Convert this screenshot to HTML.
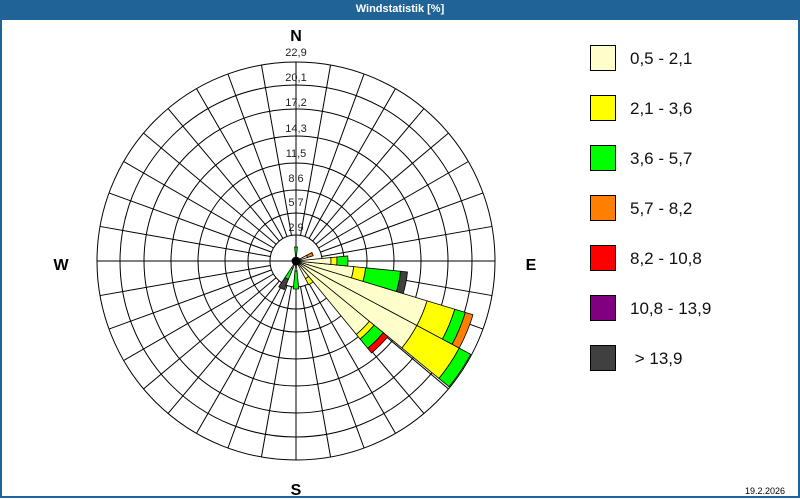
<!DOCTYPE html>
<html><head><meta charset="utf-8"><style>
body{margin:0;width:800px;height:500px;overflow:hidden;background:#fff;font-family:"Liberation Sans",sans-serif}
#wrap{position:absolute;left:0;top:0;width:796px;height:496px;border:2px solid #1f6397;border-top:none}
#hdr{position:absolute;left:0;top:0;width:800px;height:20px;background:#1f6397;color:#fff;font-size:11px;font-weight:bold;text-align:center;line-height:18px}
.lb{position:absolute;left:590px;width:24px;height:24px;border:1px solid #000}
.lt{position:absolute;left:630px;font-size:17px;color:#111}
</style></head><body>
<div id="wrap"></div>
<div id="hdr">Windstatistik [%]</div>
<svg id="s" width="800" height="500" style="position:absolute;left:0;top:0">
<g id="grid" stroke="#000" stroke-width="1" fill="none"></g>
<g id="pet" stroke="#000" stroke-width="0.8"></g>
<g font-family="Liberation Sans" font-size="11" fill="#222" text-anchor="middle">
<text x="296" y="56">22,9</text><text x="296" y="81">20,1</text><text x="296" y="106">17,2</text>
<text x="296" y="132">14,3</text><text x="296" y="157">11,5</text><text x="296" y="182">8,6</text>
<text x="296" y="206">5,7</text><text x="296" y="231">2,9</text>
</g>
<g font-family="Liberation Sans" font-size="16" font-weight="bold" fill="#000" text-anchor="middle">
<text x="296" y="41">N</text><text x="296" y="495">S</text><text x="61" y="270">W</text><text x="531" y="270">E</text>
</g>
<text x="765" y="494" font-family="Liberation Sans" font-size="9" text-anchor="middle" fill="#000">19.2.2026</text>
</svg>
<div class="lb" style="top:45px;background:#ffffcc"></div><div class="lt" style="top:49px">0,5 - 2,1</div>
<div class="lb" style="top:95px;background:#ffff00"></div><div class="lt" style="top:99px">2,1 - 3,6</div>
<div class="lb" style="top:145px;background:#00ff00"></div><div class="lt" style="top:149px">3,6 - 5,7</div>
<div class="lb" style="top:195px;background:#ff8000"></div><div class="lt" style="top:199px">5,7 - 8,2</div>
<div class="lb" style="top:245px;background:#ff0000"></div><div class="lt" style="top:249px">8,2 - 10,8</div>
<div class="lb" style="top:295px;background:#800080"></div><div class="lt" style="top:299px">10,8 - 13,9</div>
<div class="lb" style="top:345px;background:#404040"></div><div class="lt" style="top:349px">&nbsp;&gt; 13,9</div>
<script>
var cx=296,cy=261;
function P(r,b){b=b*Math.PI/180;return [(cx+r*Math.sin(b)).toFixed(2),(cy-r*Math.cos(b)).toFixed(2)];}
var g=document.getElementById('grid'),h='';
[48,71,98,125,152,176,199].forEach(function(r){h+='<circle cx="'+cx+'" cy="'+cy+'" r="'+r+'"/>';});
for(var a=0;a<360;a+=10){var p=P(26,a),q=P(199,a);h+='<line x1="'+p[0]+'" y1="'+p[1]+'" x2="'+q[0]+'" y2="'+q[1]+'"/>';}
h+='<circle cx="'+cx+'" cy="'+cy+'" r="26" fill="#fff"/>';
h+='<line x1="'+cx+'" y1="'+(cy-199)+'" x2="'+cx+'" y2="'+(cy+199)+'"/><line x1="'+(cx-199)+'" y1="'+cy+'" x2="'+(cx+199)+'" y2="'+cy+'"/>';
g.innerHTML=h;
var C={l:'#ffffcc',y:'#ffff00',g:'#00ff00',o:'#ff8000',r:'#ff0000',d:'#404040'};
var pets=[
[106.9,118.1,[[0,137,'l'],[137,166,'y'],[166,177,'g'],[177,185,'o']]],
[118.1,129.4,[[0,137,'l'],[137,185,'y'],[185,198,'g']]],
[95.6,106.9,[[0,58,'l'],[58,70,'y'],[70,105,'g'],[105,112,'d']]],
[84.4,95.6,[[0,35,'l'],[35,41,'y'],[41,52,'g']]],
[129.4,140.6,[[0,95,'l'],[95,101,'y'],[101,113,'g'],[113,119,'r']]],
[61.9,73.1,[[0,12,'l'],[12,18,'o']]],
[140.6,151.9,[[0,20,'l'],[20,27,'y']]],
[174.4,185.6,[[0,10,'l'],[10,28,'g']]],
[202.5,213.8,[[0,8,'l'],[8,20,'g'],[20,31,'d']]],
[-5.6,5.6,[[0,14,'g']]]
];
var s='';
pets.forEach(function(pt){pt[2].forEach(function(sg){
var a=P(sg[0],pt[0]),b=P(sg[1],pt[0]),c=P(sg[1],pt[1]),d=P(sg[0],pt[1]);
var dd='M'+a+' L'+b+' A'+sg[1]+' '+sg[1]+' 0 0 1 '+c+' L'+d;
if(sg[0]>0)dd+=' A'+sg[0]+' '+sg[0]+' 0 0 0 '+a;
s+='<path d="'+dd+' Z" fill="'+C[sg[2]]+'"/>';});});
s+='<circle cx="'+cx+'" cy="'+cy+'" r="4" fill="#000"/>';
document.getElementById('pet').innerHTML=s;
</script>
</body></html>
